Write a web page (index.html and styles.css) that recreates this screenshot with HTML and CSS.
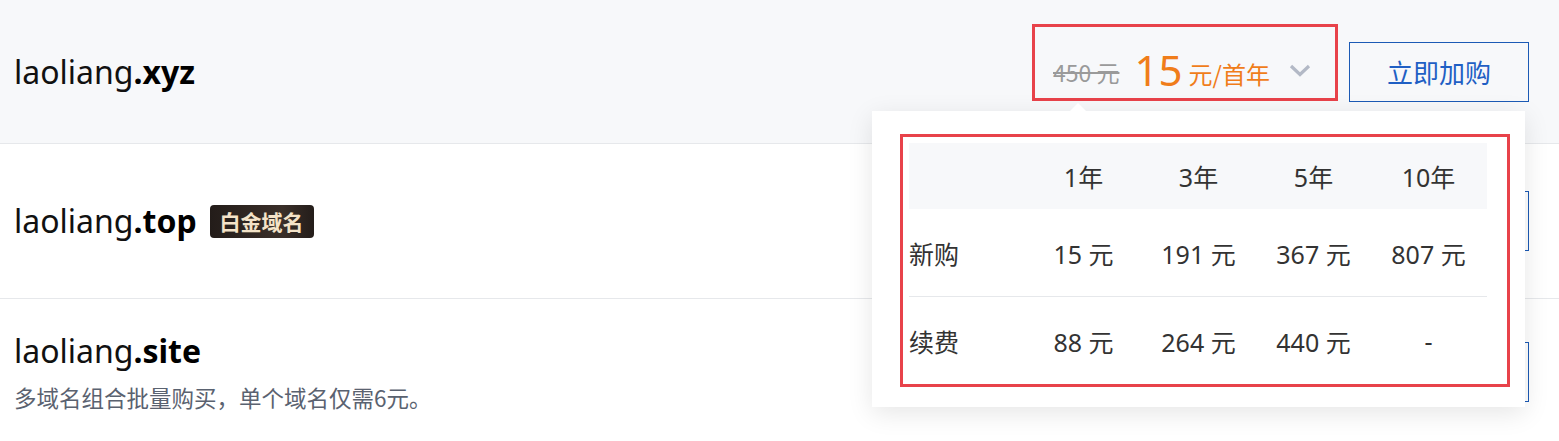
FILE: index.html
```html
<!DOCTYPE html>
<html>

<head>
    <title>域名注册</title>
    <link rel="stylesheet" href="styles.css">
</head>

<body>
    <div class="domain-list">
        <div class="domain-row active">
            <div class="domain-info">
                <div class="domain-name">laoliang<b>.xyz</b></div>
            </div>
            <div class="domain-actions">
                <div class="price-box">
                    <span class="old-price">450 元</span>
                    <span class="new-price">15</span>
                    <span class="unit">元/首年</span>
                    <svg class="chevron" width="22" height="13" viewBox="0 0 22 13">
                        <path d="M2 2 L11 10.5 L20 2" fill="none" stroke="#b3b9c6" stroke-width="3.2" />
                    </svg>
                </div>
                <button class="buy-btn">立即加购</button>
            </div>

            <div class="price-popover">
                <div class="price-table">
                    <div class="table-head">
                        <span></span>
                        <span>1年</span>
                        <span>3年</span>
                        <span>5年</span>
                        <span>10年</span>
                    </div>
                    <div class="table-row">
                        <span class="label">新购</span>
                        <span>15 元</span>
                        <span>191 元</span>
                        <span>367 元</span>
                        <span>807 元</span>
                    </div>
                    <div class="table-row">
                        <span class="label">续费</span>
                        <span>88 元</span>
                        <span>264 元</span>
                        <span>440 元</span>
                        <span>-</span>
                    </div>
                </div>
            </div>
        </div>

        <div class="domain-row tall">
            <div class="domain-info">
                <div class="domain-name">laoliang<b>.top</b><span class="badge">白金域名</span></div>
            </div>
            <div class="domain-actions">
                <button class="buy-btn">立即加购</button>
            </div>
        </div>

        <div class="domain-row last">
            <div class="domain-info">
                <div class="domain-name">laoliang<b>.site</b></div>
                <div class="domain-desc">多域名组合批量购买，单个域名仅需6元。</div>
            </div>
            <div class="domain-actions">
                <button class="buy-btn">立即加购</button>
            </div>
        </div>
    </div>
</body>

</html>
```

FILE: styles.css
```css
body {
    margin: 0;
    background-color: #fff;
    font-family: "Noto Sans", "Noto Sans CJK SC", sans-serif;
    color: #111;
}

.domain-row {
    position: relative;
    height: 143px;
    display: flex;
    align-items: center;
    justify-content: space-between;
    padding: 0 30px 0 14px;
    border-bottom: 1px solid #e6e8eb;
}

.domain-row.active {
    background-color: #f7f8fa;
}

.domain-row.tall {
    height: 154px;
}

.domain-row.last {
    height: 145px;
}

.domain-name {
    display: flex;
    align-items: center;
    font-size: 32px;
    line-height: 40px;
    color: #111;
}

.domain-name b {
    color: #000;
}

.badge {
    margin-left: 13px;
    padding: 0 10px;
    height: 33px;
    line-height: 33px;
    font-size: 21px;
    font-weight: bold;
    color: #f4e3c8;
    background: linear-gradient(90deg, #231c19, #3a2f29 70%, #241d1a);
    border-radius: 4px;
    font-family: "Noto Sans CJK SC", sans-serif;
}

.domain-desc {
    margin-top: 10px;
    font-size: 22.5px;
    color: #5a6270;
    font-family: "Noto Sans CJK SC", sans-serif;
}

.domain-actions {
    display: flex;
    align-items: center;
    gap: 11px;
}

.price-box {
    display: flex;
    align-items: center;
    height: 77px;
    box-sizing: border-box;
    width: 306px;
    margin-bottom: 19px;
    padding: 14px 0 0 18px;
    border: 3px solid #e8424a;
    font-family: "Noto Sans CJK SC", sans-serif;
}

.old-price {
    font-size: 23px;
    color: #9a9a9a;
    text-decoration: line-through;
    margin-top: 6px;
}

.new-price {
    margin-left: 15px;
    font-size: 42px;
    color: #f07d1a;
    font-family: "Noto Sans", sans-serif;
}

.unit {
    margin-left: 6px;
    font-size: 24px;
    color: #f07d1a;
    margin-top: 8px;
}

.chevron {
    margin-left: 19px;
    margin-top: 2px;
}

.buy-btn {
    width: 180px;
    height: 60px;
    border: 1px solid #1c5ab5;
    background: transparent;
    color: #1f5fc4;
    font-size: 26px;
    font-family: "Noto Sans CJK SC", sans-serif;
    cursor: pointer;
}

.price-popover {
    position: absolute;
    top: 111px;
    right: 34px;
    z-index: 10;
    width: 653px;
    box-sizing: border-box;
    padding: 23px 15px 20px 28px;
    background: #fff;
    box-shadow: 0 6px 24px rgba(0, 0, 0, 0.1);
}

.price-popover::before {
    content: "";
    position: absolute;
    top: -8px;
    left: 198px;
    border-left: 8px solid transparent;
    border-right: 8px solid transparent;
    border-bottom: 8px solid #fff;
}

.price-table {
    border: 3px solid #e8424a;
    padding: 6px 20px 0 6px;
    font-family: "Noto Sans", "Noto Sans CJK SC", sans-serif;
    font-size: 25px;
    color: #333;
}

.table-head,
.table-row {
    display: grid;
    grid-template-columns: 117px repeat(4, 115px);
    align-items: center;
    text-align: center;
}

.table-head {
    height: 66px;
    background-color: #f7f8fa;
}

.table-row {
    height: 87px;
}

.table-row + .table-row {
    border-top: 1px solid #e6e8eb;
}

.table-row .label {
    text-align: left;
}
```
